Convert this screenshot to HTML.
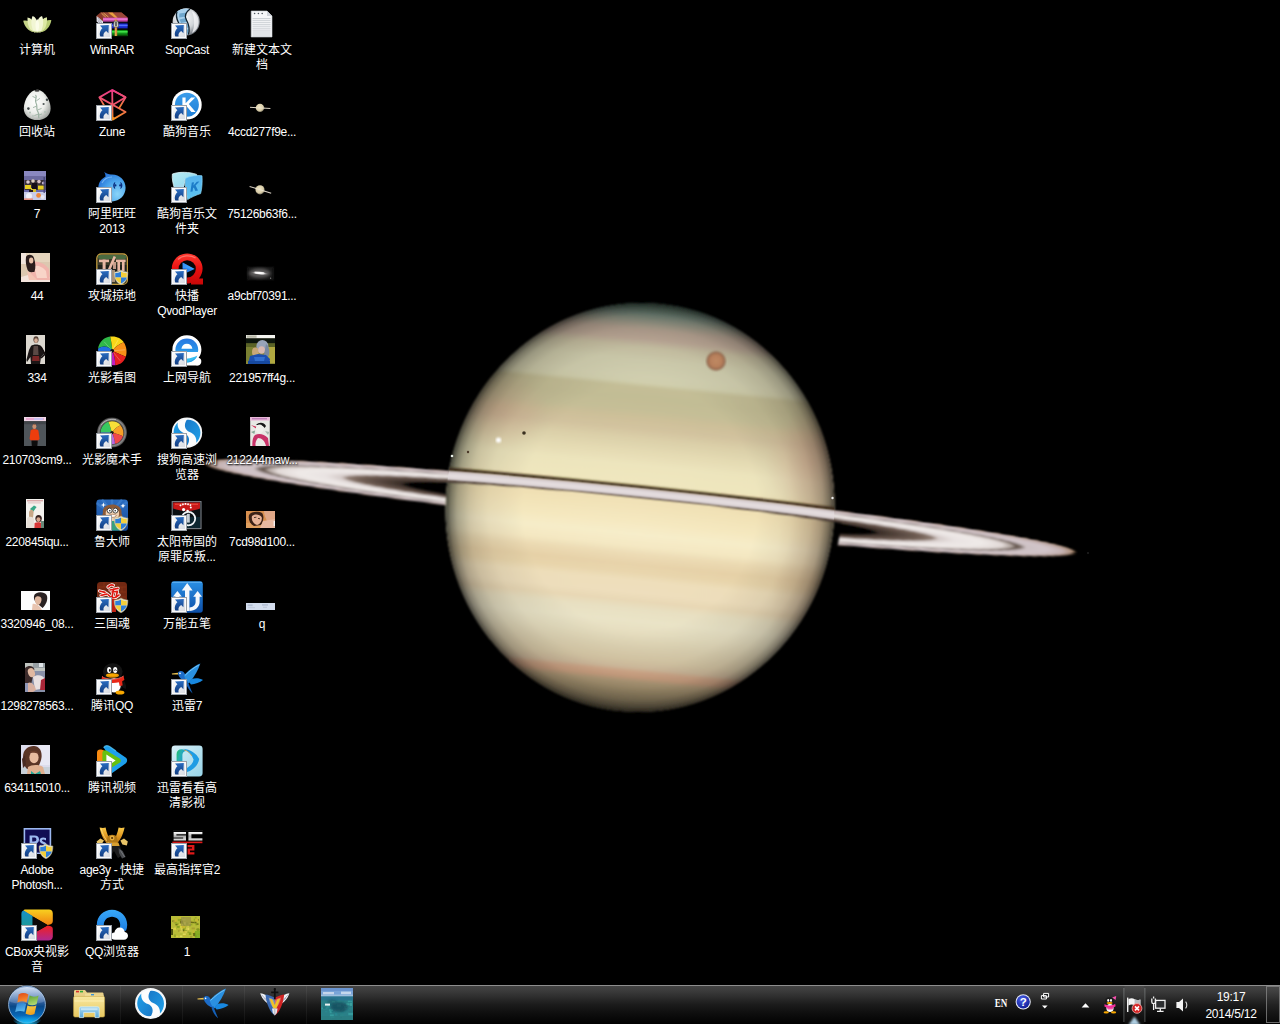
<!DOCTYPE html>
<html lang="zh-CN"><head><meta charset="utf-8"><title>Desktop</title>
<style>
html,body{margin:0;padding:0;background:#000;}
body{width:1280px;height:1024px;overflow:hidden;position:relative;font-family:"Liberation Sans",sans-serif;}
#wall{position:absolute;left:0;top:0;width:1280px;height:1024px;}
.ic{position:absolute;width:75px;height:82px;}
.ic svg{position:absolute;left:21px;top:0;width:32px;height:32px;overflow:visible;}
.ic .lb{position:absolute;left:-6.5px;top:36px;width:87px;text-align:center;color:#fff;font-size:12px;line-height:15px;
 text-shadow:1px 1px 2px #000,0 0 2px #000;white-space:nowrap;}
.lb .a{letter-spacing:-0.3px;}
#tb{position:absolute;left:0;top:985px;width:1280px;height:39px;
 background:linear-gradient(#434343 0,#3f3f3f 8%,#2e2e2e 28%,#1c1c1c 48%,#101010 68%,#070707 88%,#010101 100%);border-top:1px solid #8e8e8e;box-sizing:border-box;}
#tb .t{position:absolute;color:#fff;font-size:12px;white-space:nowrap;}
</style></head><body>
<svg id="wall" viewBox="0 0 1280 1024">
<defs>
<linearGradient id="bands" x1="0" y1="0" x2="0" y2="1"><stop offset="0.0002" stop-color="#4e6a5c"/><stop offset="0.0149" stop-color="#5f7e6e"/><stop offset="0.0320" stop-color="#7f978a"/><stop offset="0.0467" stop-color="#9ca494"/><stop offset="0.0589" stop-color="#b0aa98"/><stop offset="0.0711" stop-color="#c0ad9c"/><stop offset="0.0931" stop-color="#c6b2a0"/><stop offset="0.1127" stop-color="#cdc6a8"/><stop offset="0.1444" stop-color="#d2d0b0"/><stop offset="0.1835" stop-color="#d2d0b0"/><stop offset="0.1982" stop-color="#d0ceac"/><stop offset="0.2104" stop-color="#c2bc94"/><stop offset="0.2373" stop-color="#c0ba92"/><stop offset="0.2666" stop-color="#c3bc94"/><stop offset="0.2862" stop-color="#cbbd96"/><stop offset="0.3106" stop-color="#d0c09c"/><stop offset="0.3350" stop-color="#d9cda6"/><stop offset="0.3644" stop-color="#e2d8b0"/><stop offset="0.3986" stop-color="#ebe3bb"/><stop offset="0.4377" stop-color="#eee5bc"/><stop offset="0.4670" stop-color="#eddcb0"/><stop offset="0.5012" stop-color="#f1e1b5"/><stop offset="0.5379" stop-color="#f4e7be"/><stop offset="0.5648" stop-color="#f6ecc8"/><stop offset="0.5941" stop-color="#f3e6c0"/><stop offset="0.6136" stop-color="#ead8b0"/><stop offset="0.6381" stop-color="#e4cea4"/><stop offset="0.6576" stop-color="#e6d2a8"/><stop offset="0.6772" stop-color="#ecdcb8"/><stop offset="0.7065" stop-color="#ecdcba"/><stop offset="0.7261" stop-color="#e6d5b2"/><stop offset="0.7456" stop-color="#e6dec0"/><stop offset="0.7749" stop-color="#e8e2c6"/><stop offset="0.8043" stop-color="#e4dcbe"/><stop offset="0.8360" stop-color="#ddd2b2"/><stop offset="0.8678" stop-color="#d9caa8"/><stop offset="0.8873" stop-color="#d5bfa0"/><stop offset="0.8971" stop-color="#d8ac8c"/><stop offset="0.9093" stop-color="#d3a584"/><stop offset="0.9216" stop-color="#b6a07c"/><stop offset="0.9411" stop-color="#a4926f"/><stop offset="0.9704" stop-color="#8a7c5e"/><stop offset="0.9998" stop-color="#6a6048"/></linearGradient>
<radialGradient id="ringg" cx="0.5" cy="0.5" r="0.5"><stop offset="0.0000" stop-color="#000" stop-opacity="0"/><stop offset="0.5250" stop-color="#000" stop-opacity="0"/><stop offset="0.5480" stop-color="#3a2e28" stop-opacity="1"/><stop offset="0.5900" stop-color="#54443c" stop-opacity="1"/><stop offset="0.6400" stop-color="#705e54" stop-opacity="1"/><stop offset="0.6680" stop-color="#8e7c72" stop-opacity="1"/><stop offset="0.6840" stop-color="#d6ccca" stop-opacity="1"/><stop offset="0.7200" stop-color="#e9e3e2" stop-opacity="1"/><stop offset="0.7800" stop-color="#efeae8" stop-opacity="1"/><stop offset="0.8300" stop-color="#e2dad8" stop-opacity="1"/><stop offset="0.8500" stop-color="#b0a49e" stop-opacity="1"/><stop offset="0.8620" stop-color="#64564e" stop-opacity="1"/><stop offset="0.8720" stop-color="#80726c" stop-opacity="1"/><stop offset="0.8840" stop-color="#cdc1c4" stop-opacity="1"/><stop offset="0.9300" stop-color="#d2c5ca" stop-opacity="1"/><stop offset="0.9680" stop-color="#c4b2b2" stop-opacity="1"/><stop offset="0.9880" stop-color="#b0927e" stop-opacity="0.95"/><stop offset="1.0000" stop-color="#6a4828" stop-opacity="0"/></radialGradient>
<radialGradient id="limb" cx="0.5" cy="0.5" r="0.5"><stop offset="0" stop-color="#000" stop-opacity="0"/><stop offset="0.60" stop-color="#000" stop-opacity="0"/><stop offset="0.78" stop-color="#201810" stop-opacity="0.07"/><stop offset="0.88" stop-color="#201810" stop-opacity="0.17"/><stop offset="0.94" stop-color="#181410" stop-opacity="0.30"/><stop offset="0.975" stop-color="#100e0c" stop-opacity="0.48"/><stop offset="1" stop-color="#080808" stop-opacity="0.72"/></radialGradient>
<radialGradient id="glow" cx="0.5" cy="0.52" r="0.5"><stop offset="0" stop-color="#fff4d8" stop-opacity="0.14"/><stop offset="0.6" stop-color="#fff6d0" stop-opacity="0.05"/><stop offset="1" stop-color="#fff" stop-opacity="0"/></radialGradient>
<linearGradient id="tealL" x1="0" y1="0" x2="1" y2="0"><stop offset="0" stop-color="#3a6a5c" stop-opacity="0.22"/><stop offset="0.03" stop-color="#4a7a6c" stop-opacity="0.10"/><stop offset="0.08" stop-color="#4a7a6c" stop-opacity="0"/><stop offset="0.86" stop-color="#a06850" stop-opacity="0"/><stop offset="0.96" stop-color="#a06850" stop-opacity="0.18"/><stop offset="1" stop-color="#605040" stop-opacity="0.3"/></linearGradient>
<radialGradient id="pinkT" cx="0.5" cy="0.5" r="0.5"><stop offset="0" stop-color="#d89c8c" stop-opacity="0.34"/><stop offset="0.6" stop-color="#d89c8c" stop-opacity="0.14"/><stop offset="1" stop-color="#d89c8c" stop-opacity="0"/></radialGradient>
<clipPath id="pclip"><ellipse cx="640.0" cy="507.5" rx="194.4" ry="204.6"/></clipPath>
<clipPath id="pclipS"><ellipse cx="640.0" cy="507.5" rx="194.4" ry="204.6" transform="rotate(5.7 640.0 507.5)"/></clipPath>
<clipPath id="upper"><rect x="0" y="448.0" width="1280" height="60"/></clipPath>
<filter id="b1" x="-5%" y="-5%" width="110%" height="110%"><feGaussianBlur stdDeviation="1.0"/></filter>
<filter id="b2" x="-5%" y="-50%" width="110%" height="200%"><feGaussianBlur stdDeviation="0.8"/></filter>
<radialGradient id="titan" cx="0.5" cy="0.5" r="0.5"><stop offset="0" stop-color="#bf8a64"/><stop offset="0.62" stop-color="#b67e5a"/><stop offset="0.86" stop-color="#94684e"/><stop offset="1" stop-color="#8a7058" stop-opacity="0.55"/></radialGradient>
</defs>
<rect width="1280" height="1024" fill="#000"/>
<g transform="rotate(5.85 640.0 508.0)" filter="url(#b2)"><ellipse cx="640.0" cy="508.0" rx="439.5" ry="19.0" fill="url(#ringg)"/></g>
<path d="M828 520 L842 520 L836 556 L822 556Z" fill="#000" filter="url(#b2)"/>
<g filter="url(#b1)"><g transform="rotate(5.7 640.0 507.5)"><g clip-path="url(#pclip)"><rect x="443.6" y="300.9" width="392.8" height="413.2" fill="url(#bands)"/><ellipse cx="640.0" cy="527.5" rx="194.4" ry="204.6" fill="url(#glow)"/><rect x="445.6" y="302.9" width="388.8" height="409.2" fill="url(#tealL)"/><ellipse cx="806.0" cy="445.5" rx="46" ry="52" fill="url(#pinkT)"/><ellipse cx="490.0" cy="423.5" rx="50" ry="40" fill="url(#pinkT)" opacity="0.75"/><ellipse cx="640.0" cy="507.5" rx="194.4" ry="204.6" fill="url(#limb)"/></g></g></g>
<g clip-path="url(#pclipS)"><g transform="rotate(5.85 640.0 508.0)"><g clip-path="url(#upper)" filter="url(#b2)"><ellipse cx="640.0" cy="506.4" rx="439.5" ry="19.0" fill="none" stroke="#34240e" stroke-width="3.6" opacity="0.95"/></g></g></g>
<g transform="rotate(5.85 640.0 508.0)"><g clip-path="url(#upper)"><g filter="url(#b2)"><ellipse cx="640.0" cy="508.0" rx="439.5" ry="19.0" fill="url(#ringg)"/></g></g></g>
<g clip-path="url(#pclipS)"><g transform="rotate(5.85 640.0 508.0)"><g clip-path="url(#upper)" filter="url(#b2)"><ellipse cx="640.0" cy="508.0" rx="353.7975" ry="15.295000000000002" fill="none" stroke="#d9d0d3" stroke-width="7.6"/><ellipse cx="640.0" cy="508.0" rx="347.20500000000004" ry="15.010000000000002" fill="none" stroke="#e6dfe0" stroke-width="3"/></g></g></g>
<circle cx="716" cy="361" r="10" fill="url(#titan)" filter="url(#b2)"/><circle cx="524" cy="433" r="1.8" fill="#3a3020"/><circle cx="498.5" cy="440" r="2.6" fill="#fff" filter="url(#b2)"/><circle cx="468" cy="452" r="1.2" fill="#4a3828"/><circle cx="452" cy="456" r="1.3" fill="#e8f0e8"/><circle cx="832.5" cy="498" r="1.2" fill="#f0f0f0"/><circle cx="1088" cy="553" r="1" fill="#222"/>
</svg>
<svg width="0" height="0" style="position:absolute"><defs>
<linearGradient id="scbg" x1="0" y1="0" x2="1" y2="1"><stop offset="0" stop-color="#ffffff"/><stop offset="1" stop-color="#d4d8e0"/></linearGradient>
<linearGradient id="scar" x1="0" y1="0" x2="0" y2="1"><stop offset="0" stop-color="#2a6cc0"/><stop offset="1" stop-color="#123c80"/></linearGradient>
<g id="sc"><rect x="0.5" y="16.5" width="15" height="15" fill="url(#scbg)" stroke="#9aa0a8" stroke-width="1"/>
<rect x="1.5" y="17.5" width="13" height="13" fill="none" stroke="#fff" stroke-width="1" opacity="0.8"/>
<path d="M4 18.6 L12.8 18 L12.4 26.2 L10.2 24 C8.2 25.2 7 27 7.6 29.6 L4.4 29.6 C3 26.6 4.2 23.2 6.4 21.2 Z" fill="url(#scar)"/></g>
<g id="uac"><path d="M25 17 C27.5 18.6 29.8 19 31.8 19 C32 25 30 29.4 25 31.8 C20 29.4 18 25 18.2 19 C20.2 19 22.5 18.6 25 17Z" fill="#e8e4d0" stroke="#b0a880" stroke-width="0.6"/>
<path d="M25 18.4 L25 24.4 L19.3 24.4 C19.2 22.8 19.2 21.4 19.3 20 C21.4 19.9 23.2 19.4 25 18.4Z" fill="#2e7fd8"/>
<path d="M25 18.4 C26.8 19.4 28.6 19.9 30.7 20 C30.8 21.4 30.8 22.8 30.7 24.4 L25 24.4Z" fill="#f4d03a"/>
<path d="M19.3 24.4 L25 24.4 L25 30.4 C21.8 28.8 19.9 26.8 19.3 24.4Z" fill="#f4d03a"/>
<path d="M25 24.4 L30.7 24.4 C30.1 26.8 28.2 28.8 25 30.4Z" fill="#2e7fd8"/></g>
<radialGradient id="gEgg" cx="0.42" cy="0.4" r="0.62"><stop offset="0" stop-color="#ffffff"/><stop offset="0.6" stop-color="#eceeea"/><stop offset="1" stop-color="#a8aca8"/></radialGradient>
<radialGradient id="gSop" cx="0.4" cy="0.35" r="0.7"><stop offset="0" stop-color="#ffffff"/><stop offset="0.6" stop-color="#d0d4d8"/><stop offset="1" stop-color="#6a7078"/></radialGradient>
<linearGradient id="gZune" x1="0" y1="0" x2="0" y2="1"><stop offset="0" stop-color="#ec3c86"/><stop offset="0.5" stop-color="#ee5a6a"/><stop offset="1" stop-color="#f59020"/></linearGradient>
<linearGradient id="gKg" x1="0" y1="0" x2="0" y2="1"><stop offset="0" stop-color="#3a9cea"/><stop offset="1" stop-color="#1f7fd6"/></linearGradient>
<radialGradient id="gSat" cx="0.45" cy="0.4" r="0.6"><stop offset="0" stop-color="#f0e6c4"/><stop offset="0.7" stop-color="#d8cca8"/><stop offset="1" stop-color="#7a7460"/></radialGradient>
<radialGradient id="gAli" cx="0.7" cy="0.75" r="0.9"><stop offset="0" stop-color="#8ad4f8"/><stop offset="0.5" stop-color="#4aa4ec"/><stop offset="1" stop-color="#1c62d0"/></radialGradient>
<linearGradient id="gFoldB" x1="0" y1="0" x2="1" y2="1"><stop offset="0" stop-color="#b8ecf4"/><stop offset="1" stop-color="#8ad4ec"/></linearGradient>
<linearGradient id="gFoldF" x1="0" y1="0" x2="0" y2="1"><stop offset="0" stop-color="#58b4ee"/><stop offset="1" stop-color="#5cc4f0"/></linearGradient>
<linearGradient id="gQv" x1="0" y1="0" x2="0" y2="1"><stop offset="0" stop-color="#ff3a30"/><stop offset="0.5" stop-color="#e81010"/><stop offset="1" stop-color="#c80808"/></linearGradient>
<linearGradient id="gQvP" x1="0" y1="0" x2="1" y2="0"><stop offset="0" stop-color="#1060e0"/><stop offset="1" stop-color="#38a0ff"/></linearGradient>
<radialGradient id="gGal" cx="0.5" cy="0.5" r="0.5"><stop offset="0" stop-color="#ffffff"/><stop offset="0.5" stop-color="#c8c4c4"/><stop offset="1" stop-color="#444" stop-opacity="0"/></radialGradient>
<linearGradient id="gIe" x1="0" y1="0" x2="0" y2="1"><stop offset="0" stop-color="#2a78e0"/><stop offset="0.6" stop-color="#2a90e8"/><stop offset="1" stop-color="#38c0f0"/></linearGradient>
<radialGradient id="gRing" cx="0.5" cy="0.5" r="0.5"><stop offset="0.78" stop-color="#555"/><stop offset="0.88" stop-color="#8a8a8a"/><stop offset="1" stop-color="#3a3a3a"/></radialGradient>
<linearGradient id="gSg" x1="0" y1="0" x2="1" y2="1"><stop offset="0" stop-color="#1878c8"/><stop offset="1" stop-color="#20a0e8"/></linearGradient>
<linearGradient id="gLu" x1="0" y1="0" x2="0" y2="1"><stop offset="0" stop-color="#2a6cc0"/><stop offset="1" stop-color="#174a98"/></linearGradient>
<linearGradient id="gWb" x1="0" y1="0" x2="0" y2="1"><stop offset="0" stop-color="#2a90e4"/><stop offset="1" stop-color="#0c4ea8"/></linearGradient>
<linearGradient id="gKk" x1="0" y1="0" x2="1" y2="1"><stop offset="0" stop-color="#d8f0f8"/><stop offset="1" stop-color="#98d4e8"/></linearGradient>
<linearGradient id="gKkP" x1="0" y1="0" x2="1" y2="0.6"><stop offset="0" stop-color="#20c060"/><stop offset="0.35" stop-color="#28b0b0"/><stop offset="1" stop-color="#1890e0"/></linearGradient>
<linearGradient id="gCbY" x1="0" y1="0" x2="0" y2="1"><stop offset="0" stop-color="#f8d020"/><stop offset="1" stop-color="#f08010"/></linearGradient>
<linearGradient id="gCbR" x1="0" y1="0" x2="0" y2="1"><stop offset="0" stop-color="#f02020"/><stop offset="1" stop-color="#b02890"/></linearGradient>
<linearGradient id="gCbB" x1="0" y1="0" x2="0" y2="1"><stop offset="0" stop-color="#1890c8"/><stop offset="1" stop-color="#20a070"/></linearGradient>
<linearGradient id="gQb" x1="0" y1="0" x2="0" y2="1"><stop offset="0" stop-color="#38a8f8"/><stop offset="1" stop-color="#1878e0"/></linearGradient>
<linearGradient id="gGold" x1="0" y1="0" x2="0" y2="1"><stop offset="0" stop-color="#f8c848"/><stop offset="0.5" stop-color="#e09820"/><stop offset="1" stop-color="#a86810"/></linearGradient>
<linearGradient id="gSc" x1="0" y1="0" x2="0" y2="1"><stop offset="0" stop-color="#ffffff"/><stop offset="0.5" stop-color="#b0b0b0"/><stop offset="1" stop-color="#e0e0e0"/></linearGradient>
<filter id="fb" x="-20%" y="-20%" width="140%" height="140%"><feGaussianBlur stdDeviation="0.5"/></filter>
<filter id="fb1" x="-20%" y="-20%" width="140%" height="140%"><feGaussianBlur stdDeviation="1"/></filter>
<filter id="fb2" x="-30%" y="-30%" width="160%" height="160%"><feGaussianBlur stdDeviation="1.8"/></filter>
</defs></svg>
<div class="ic" style="left:0px;top:7px"><svg viewBox="0 0 32 32"><g filter="url(#fb)"><path d="M2.2 13.8 C6 13 9 14.5 11 17 L12 25 C7 24 3.5 19.5 2.2 13.8Z" fill="#c6d488"/><path d="M30.4 13.2 C26.5 12.6 23.5 14.4 21.6 17 L20.5 25 C25.5 24 29.2 19.4 30.4 13.2Z" fill="#b8cc74"/><path d="M6.5 10.5 C10 11 12.5 13.5 13.5 17 L14 25.4 C9 24.6 6 18 6.5 10.5Z" fill="#e6eeb8"/><path d="M26 10.2 C22.4 10.8 20 13.4 19 17 L18.6 25.4 C23.5 24.6 26.6 18 26 10.2Z" fill="#dce8a4"/><path d="M11.6 9 C14.5 10 16 13 16.2 16 C16.4 13 18 10 21 9 C23 13 22.6 20 19.5 25.2 L13 25.2 C10 20 9.6 13 11.6 9Z" fill="#f2f6d4"/><path d="M16.2 12 C18.6 15 18.8 21 16.4 25.5 C13.8 21 13.8 15 16.2 12Z" fill="#fbfce8"/><path d="M8 22 C11 25.6 21 25.8 24.5 22 C22 26.4 10.5 26.6 8 22Z" fill="#a8b868"/></g></svg><div class="lb">计算机</div></div>
<div class="ic" style="left:75px;top:7px"><svg viewBox="0 0 32 32"><g transform="translate(0 4.6)"><path d="M0.6 4.2 L4.5 1 L25.5 1 L31.6 6 L31.6 9.4 L7 9.4 L7 10.5 L0.6 6.8Z" fill="#8a3a2a"/><path d="M4.5 1 L25.5 1 L31.6 6 L7 6Z" fill="#9a4838"/><path d="M12 1 L16.5 1 L21.5 6 L21 9 L18.6 9 L19 6.5Z" fill="#e8a040"/><path d="M5.5 1.6 L10 5.8 M7.5 1.4 L12.6 5.6" stroke="#f0b858" stroke-width="0.8"/><rect x="7" y="6" width="24.6" height="4.2" fill="#c848a8"/><rect x="7" y="6.8" width="24.6" height="1.4" fill="#f080d8"/><path d="M0.6 4.4 L7 9.6 L7 15 L0.6 9.8Z" fill="#e8e8f0"/><path d="M1.6 6 L6.2 9.8 M1.6 7.8 L6.2 11.6 M1.6 9.4 L6.2 13.2" stroke="#8a8a9a" stroke-width="0.7"/><rect x="7" y="10.2" width="24.6" height="1.6" fill="#101020"/><rect x="7" y="11.8" width="24.6" height="5.2" fill="#1828c8"/><rect x="7" y="13" width="24.6" height="1.6" fill="#5070ff"/><rect x="7" y="17" width="24.6" height="1.4" fill="#081008"/><rect x="7" y="18.4" width="24.6" height="6" fill="#109018"/><rect x="7" y="19.4" width="24.6" height="1.6" fill="#40e048"/><rect x="7" y="23" width="24.6" height="1.6" fill="#084808"/><rect x="18.6" y="8" width="2.6" height="16.4" fill="#c88030"/><rect x="19.3" y="8" width="1" height="16.4" fill="#f0b860"/><path d="M18 9.6 L22 9.6 L22.6 15.4 L17.4 15.4Z" fill="#d8d8d0" stroke="#404040" stroke-width="0.6"/><rect x="19.4" y="10.4" width="1.2" height="4" fill="#202020"/></g><use href="#sc"/></svg><div class="lb"><span class="a">WinRAR</span></div></div>
<div class="ic" style="left:150px;top:7px"><svg viewBox="0 0 32 32"><circle cx="15.2" cy="14.8" r="13.6" fill="url(#gSop)"/><path d="M6 4.6 C10 1.4 15 0.8 19 2 C15 5 13 9 15.4 13 C18 17.4 19.4 21 17.4 27.6 L10 27.4 C11 22 9 18.6 7.2 15 C5.4 11.4 5 7.6 6 4.6Z" fill="#a8d0ec"/><path d="M8.4 6.6 L15.6 5.6 L14.8 9.4 L8.2 10.6Z M8.6 12.4 L15 11 L16.6 14.6 L10 16Z M10.8 17.8 L17.4 16.4 L18 20.4 L11.6 21.6Z M11.8 23.4 L18 22.2 L17.4 26.4 L11.6 27Z" fill="#6ea6cc"/><path d="M6 4.6 C5 7.6 5.4 11.4 7.2 15 C9 18.6 11 22 10 27.4" fill="none" stroke="#10202c" stroke-width="1.3"/><path d="M19 2 C15 5 13 9 15.4 13 C18 17.4 19.4 21 17.4 27.6" fill="none" stroke="#10202c" stroke-width="1.3"/><path d="M20.5 4 C25 6 27.6 10 27.6 15 C27.6 20 25 24 21 26 C24 20 24 10 20.5 4Z" fill="#f4f4f6" opacity="0.8"/><use href="#sc"/></svg><div class="lb"><span class="a">SopCast</span></div></div>
<div class="ic" style="left:225px;top:7px"><svg viewBox="0 0 32 32"><path d="M5.2 4 L21 4 L26 9 L26 30 L5.2 30Z" fill="#f6f7f9" stroke="#c8ccd2" stroke-width="0.6"/><path d="M21 4 L21 9 L26 9Z" fill="#d0d4da"/><circle cx="8.6" cy="6.5" r="0.8" fill="#505860"/><circle cx="12.4" cy="6.5" r="0.8" fill="#505860"/><circle cx="16.2" cy="6.5" r="0.8" fill="#505860"/><rect x="6.6" y="11.0" width="18" height="0.8" fill="#c4c8ce"/><rect x="6.6" y="12.9" width="18" height="0.8" fill="#c4c8ce"/><rect x="6.6" y="14.9" width="18" height="0.8" fill="#c4c8ce"/><rect x="6.6" y="16.9" width="18" height="0.8" fill="#c4c8ce"/><rect x="6.6" y="18.8" width="18" height="0.8" fill="#c4c8ce"/><rect x="6.6" y="20.8" width="18" height="0.8" fill="#c4c8ce"/><rect x="6.6" y="22.7" width="18" height="0.8" fill="#c4c8ce"/><rect x="6.6" y="24.6" width="18" height="0.8" fill="#c4c8ce"/><rect x="6.6" y="26.6" width="18" height="0.8" fill="#c4c8ce"/><rect x="6.6" y="28.6" width="18" height="0.8" fill="#c4c8ce"/></svg><div class="lb">新建文本文<br>档</div></div>
<div class="ic" style="left:0px;top:89px"><svg viewBox="0 0 32 32"><path d="M16 0.8 C23 0.8 29.6 11 29.6 19.4 C29.6 26.6 23.6 31 16.2 31 C8.8 31 2.8 26.6 2.8 19.4 C2.8 11 9 0.8 16 0.8Z" fill="url(#gEgg)"/><ellipse cx="16" cy="1.8" rx="2.6" ry="1" fill="#404040"/><path d="M14.5 6 C17 8 13 11 15 14 C17 17 14.5 20 17 23 C18.5 25 17 27 18 29" fill="none" stroke="#9ab0a0" stroke-width="1.2"/><path d="M15 9 L11.5 7.4 M15.2 12 L18.8 9.4 M16 17 L12 18.6 M16.6 21 L20.6 19.4 M17.4 25 L13.4 26.6 M17.6 26 L21 25" stroke="#a4b8aa" stroke-width="1"/><circle cx="26" cy="10.8" r="1.2" fill="#404848"/><circle cx="22.6" cy="15" r="1.1" fill="#505858"/><circle cx="7.4" cy="19.6" r="1.3" fill="#404848"/><circle cx="9" cy="23.6" r="1" fill="#b0c0b4"/><circle cx="24" cy="23" r="1" fill="#b0c0b4"/><circle cx="12" cy="27" r="0.9" fill="#b8c4bc"/></svg><div class="lb">回收站</div></div>
<div class="ic" style="left:75px;top:89px"><svg viewBox="0 0 32 32"><g fill="none" stroke="url(#gZune)" stroke-width="1.8" stroke-linejoin="round"><path d="M16.2 1 L3.4 8.4 L29.6 23 L16.6 30.6 L16.2 1 L29.6 8.2 L4 23.6 L16.6 30.6"/><path d="M29.6 8.2 L23 19.4 M3.4 8.4 L10 19.8 M16.2 1 L29.6 8.2"/></g><path d="M16.2 0.6 L18.6 2.4 L14 2.6Z" fill="#ec3c86"/><path d="M29.8 8 L28.4 10.8 L27 7.2Z" fill="#ee4c7a"/><path d="M16.6 30.8 L16.4 27.6 L19.4 29.2Z" fill="#f59020"/><use href="#sc"/></svg><div class="lb"><span class="a">Zune</span></div></div>
<div class="ic" style="left:150px;top:89px"><svg viewBox="0 0 32 32"><circle cx="15.9" cy="15.8" r="14.8" fill="#ffffff"/><circle cx="15.9" cy="15.8" r="12" fill="url(#gKg)"/><path d="M11.4 8.6 L14.6 8.6 L14.6 14.2 L20.2 8.6 L24.2 8.6 L17.8 15 L24.6 23 L20.4 23 L15.6 17.2 L14.6 18.2 L14.6 23 L11.4 23Z" fill="#ffffff"/><use href="#sc"/></svg><div class="lb">酷狗音乐</div></div>
<div class="ic" style="left:225px;top:89px"><svg viewBox="0 0 32 32"><g filter="url(#fb)"><path d="M4 18.3 L24.4 19.5" stroke="#d8d0c0" stroke-width="1"/><circle cx="14" cy="18.9" r="4.2" fill="url(#gSat)"/><path d="M9.4 18.7 L18.6 19.2" stroke="#efe8d4" stroke-width="0.7"/></g></svg><div class="lb"><span class="a">4ccd277f9e...</span></div></div>
<div class="ic" style="left:0px;top:171px"><svg viewBox="0 0 32 32"><g filter="url(#fb)"><rect x="3" y="0" width="22" height="29" fill="#6a68a8"/><rect x="3" y="0" width="22" height="5" fill="#8a88c0"/><rect x="3" y="5" width="22" height="5" fill="#6c6aa0"/><rect x="3.5" y="9" width="21" height="10" fill="#3a3038"/><circle cx="7" cy="11" r="1.8" fill="#d8c8d0"/><circle cx="12" cy="10" r="1.8" fill="#e0d0c0"/><circle cx="18" cy="10.6" r="1.8" fill="#d8c0c8"/><circle cx="22.4" cy="12" r="1.5" fill="#c8b8d0"/><rect x="4" y="14" width="6" height="4" fill="#e8d020"/><rect x="17" y="14.6" width="6.4" height="4" fill="#e8d020"/><rect x="10" y="17" width="5" height="4" fill="#d8c028"/><rect x="11" y="12" width="5" height="6" fill="#181018"/><rect x="8" y="19" width="4" height="5" fill="#201820"/><rect x="3" y="21" width="22" height="8" fill="#c8cce8"/><circle cx="8" cy="25" r="3" fill="#f0f0f8"/><circle cx="17.6" cy="24.4" r="2.4" fill="#f08838"/><circle cx="21.6" cy="26" r="2" fill="#e8e8f4"/><rect x="3" y="27.4" width="9" height="1.6" fill="#e89080"/><rect x="22.6" y="6" width="1.2" height="16" fill="#404070"/></g></svg><div class="lb">7</div></div>
<div class="ic" style="left:75px;top:171px"><svg viewBox="0 0 32 32"><path d="M8.2 0.8 C10.4 2.6 12.6 3.4 15 3.6 C23 3 29.6 9 29.6 16.8 C29.6 24.4 23.6 30.4 16 30.4 C8.4 30.4 2.4 24.4 2.4 16.8 C2.4 11 5.6 7.6 9.6 5.4 C9.4 3.8 9 2.2 8.2 0.8Z" fill="url(#gAli)"/><path d="M19 11 C16.6 12.4 16.6 16.6 19 18 C19.8 17.4 18.6 16.2 18.6 14.5 C18.6 12.8 19.8 11.6 19 11Z" fill="#0a2f80"/><path d="M24.6 11 C27 12.4 27 16.6 24.6 18 C23.8 17.4 25 16.2 25 14.5 C25 12.8 23.8 11.6 24.6 11Z" fill="#0a2f80"/><circle cx="19.4" cy="14.4" r="1.1" fill="#0a2f80"/><circle cx="24.2" cy="14.4" r="1.1" fill="#0a2f80"/><path d="M6 12 C8 8 12 6 16 6" fill="none" stroke="#9ad0ff" stroke-width="1.2" opacity="0.6"/><use href="#sc"/></svg><div class="lb">阿里旺旺<br><span class="a">2013</span></div></div>
<div class="ic" style="left:150px;top:171px"><svg viewBox="0 0 32 32"><path d="M1.4 3 C8 0.6 18 0.8 25.6 3.4 L26 6 L14 8 L13 15 L3.4 17 C2 13 0.8 7 1.4 3Z" fill="url(#gFoldB)" stroke="#dff6fb" stroke-width="0.8"/><path d="M3.4 15 C6 13.6 10 13.2 13 14 L13 18 L4 19Z" fill="#a8dcf0"/><path d="M14.4 7.4 C19 4.8 26 4 31 4.8 C31.4 11 31 18 29.6 22.6 C25 24 20 26.4 16.6 28.6 C15 22 13.6 13 14.4 7.4Z" fill="url(#gFoldF)" stroke="#8ad8f8" stroke-width="0.7"/><path d="M20.8 11.6 L23 11.2 L22.4 14.6 L25.8 10.8 L28.4 10.4 L24.6 14.6 L27 19.6 L24.4 20 L22.8 16.4 L22 17.2 L21.6 20.4 L19.4 20.8Z" fill="#1c7cc8"/><use href="#sc"/></svg><div class="lb">酷狗音乐文<br>件夹</div></div>
<div class="ic" style="left:225px;top:171px"><svg viewBox="0 0 32 32"><g filter="url(#fb)"><path d="M3.6 15.4 L25.2 22.2" stroke="#d8d0c4" stroke-width="1.1"/><circle cx="14" cy="18.8" r="4.6" fill="url(#gSat)"/><path d="M9.6 17.4 L18.6 20.2" stroke="#f0e8d8" stroke-width="0.8"/></g></svg><div class="lb"><span class="a">75126b63f6...</span></div></div>
<div class="ic" style="left:0px;top:253px"><svg viewBox="0 0 32 32"><g filter="url(#fb)"><rect x="0" y="0" width="29" height="29" fill="#dcc8b0"/><rect x="0" y="0" width="29" height="9" fill="#e4d4bc"/><rect x="0" y="0" width="5" height="11" fill="#f0e4dc"/><path d="M0 24 L14 20 L29 24 L29 29 L0 29Z" fill="#f4e4dc"/><path d="M11 9 C15 7 24 10 28 16 L29 27 L14 27 C9 24 8 16 11 9Z" fill="#f0b4ac"/><path d="M13 13 C17 12 22 14 25 18 L26 25 L16 25Z" fill="#f8d4c8"/><path d="M5 4 C6 1 12 1 13 5 C14.6 10 15 15 13.4 19 C11 19 8 20 6.6 17 C5 13 4.4 8 5 4Z" fill="#2a1c1c"/><ellipse cx="10.2" cy="7.4" rx="2.2" ry="3" fill="#e8c0a8"/><path d="M6 18 C10 20 13 24 16 27 L8 27Z" fill="#f4c4b4"/></g></svg><div class="lb"><span class="a">44</span></div></div>
<div class="ic" style="left:75px;top:253px"><svg viewBox="0 0 32 32"><rect x="0.8" y="0.8" width="30.6" height="30.6" rx="4.5" fill="#3a3a28" stroke="#c8a040" stroke-width="1.2"/><rect x="2" y="2" width="28.4" height="4" rx="2" fill="#4a6a40"/><rect x="2" y="12" width="28.4" height="8" fill="#20221c"/><g fill="#e8b8a4"><rect x="3" y="6.6" width="10" height="2.6"/><rect x="6.6" y="6.6" width="3" height="12"/><path d="M12 16 L17.6 3 L20 4 L14.4 17Z"/><rect x="20" y="6.6" width="9.6" height="2.4"/><rect x="21.4" y="9" width="2.6" height="9"/><rect x="26" y="9" width="2.6" height="9"/><rect x="17" y="9" width="3" height="7" opacity="0.8"/></g><rect x="16" y="17" width="3" height="12" fill="#a89078"/><use href="#sc"/><use href="#uac"/></svg><div class="lb">攻城掠地</div></div>
<div class="ic" style="left:150px;top:253px"><svg viewBox="0 0 32 32"><path d="M16.2 0.4 C24.8 0.4 31.6 7.2 31.6 15.6 C31.6 19.4 30.2 22.8 28 25.4 L32 25.6 L32 31.6 L20 31.6 L20 29.8 C18.8 30.4 17.4 30.6 16.2 30.6 C7.6 30.6 0.8 23.8 0.8 15.6 C0.8 7.2 7.6 0.4 16.2 0.4Z" fill="url(#gQv)"/><circle cx="16.2" cy="15.8" r="8.6" fill="#050508"/><path d="M7 6.4 C11 2.4 19 1.6 24.6 5" fill="none" stroke="#ff8a80" stroke-width="1.4" opacity="0.7"/><path d="M11.6 9.4 L23.6 16 L11.6 21.6Z" fill="url(#gQvP)"/><path d="M11.6 9.4 L23.6 16 L11.6 15.2Z" fill="#50b0ff" opacity="0.6"/><use href="#sc"/></svg><div class="lb">快播<br><span class="a">QvodPlayer</span></div></div>
<div class="ic" style="left:225px;top:253px"><svg viewBox="0 0 32 32"><rect x="0.8" y="13.4" width="27.4" height="14.2" fill="#0c0c0c"/><rect x="2" y="14.4" width="25" height="12.2" fill="#141414" filter="url(#fb1)"/><ellipse cx="13.6" cy="20.2" rx="11" ry="4.6" fill="#5a5858" filter="url(#fb2)"/><ellipse cx="13.8" cy="20.2" rx="9.6" ry="2" fill="url(#gGal)" transform="rotate(5 13.8 20.2)"/><ellipse cx="13.4" cy="19.8" rx="5" ry="1.1" fill="#fff" filter="url(#fb)" transform="rotate(5 13.4 19.8)"/><circle cx="24.6" cy="25.2" r="0.6" fill="#888"/></svg><div class="lb"><span class="a">a9cbf70391...</span></div></div>
<div class="ic" style="left:0px;top:335px"><svg viewBox="0 0 32 32"><g filter="url(#fb)"><rect x="5" y="0" width="19" height="29" fill="#dcd8d0"/><ellipse cx="15" cy="4.6" rx="2.6" ry="3.4" fill="#5a4438"/><ellipse cx="15" cy="5.6" rx="1.8" ry="2.4" fill="#d8b098"/><path d="M10 11 C12 9 18 9 20 11 L23.6 18 L20 22 L19 29 L10 29 L9.4 22 L6 27 L5.4 25 L8 15Z" fill="#1c1818"/><path d="M12.6 11 L17 11 L17.6 20 L12 20Z" fill="#5a4a44"/><path d="M11.6 21 L18 21 L18.6 26 L11 26Z" fill="#7a2828"/><path d="M20 12 L24 19 L20 23" fill="none" stroke="#141010" stroke-width="1.6"/></g></svg><div class="lb"><span class="a">334</span></div></div>
<div class="ic" style="left:75px;top:335px"><svg viewBox="0 0 32 32"><g transform="translate(16.2 15.8)"><path d="M0 0 C-3 -4 -9 -6 -14.2 -2 C-13 -9 -8 -13.6 -2 -14.2 C-1 -9 0 -4 0 0Z" fill="#30b848"/><path d="M0 0 C0 -4 -1 -9 -2 -14.2 C4 -15 9 -12.6 11.6 -8.6 C7 -7 3 -4 0 0Z" fill="#f8d818"/><path d="M0 0 C3 -4 7 -7 11.6 -8.6 C14.6 -4 15 2 13.6 6 C9 4 4 2 0 0Z" fill="#f89018"/><path d="M0 0 C4 2 9 4 13.6 6 C12 11 8 14 3 14.4 C3 9 2 4 0 0Z" fill="#e82020"/><path d="M0 0 C2 4 3 9 3 14.4 C-1 15 -5 13.6 -7.6 11 C-4 8 -1 4 0 0Z" fill="#c020c0"/><path d="M0 0 C-1 4 -4 8 -7.6 11 C-11.6 8 -14 3 -14.2 -2 C-9 -6 -3 -4 0 0Z" fill="#2070e0"/><path d="M-8 -9 L0 0 M6 -11 L0 0 M13 -1 L0 0 M8 10 L0 0" stroke="#ffffff" stroke-width="0.5" opacity="0.5"/><circle cx="0" cy="0" r="1.9" fill="#101010"/></g><use href="#sc"/></svg><div class="lb">光影看图</div></div>
<div class="ic" style="left:150px;top:335px"><svg viewBox="0 0 32 32"><path d="M15.9 0.2 C24 0.2 30.4 6.6 30.4 14.4 C30.4 17.6 29.4 20.4 27.6 22.8 C30 23.4 30.6 25.4 30.2 27.4 C29.6 30 27.6 30.8 25 30.6 L8 30.6 C3.6 27.6 1.2 21 1.4 14.4 C1.4 6.6 7.8 0.2 15.9 0.2Z" fill="#ffffff"/><path d="M15.9 3.4 C22.2 3.4 27.2 8.2 27.2 14.4 C27.2 15.4 27.1 16.2 26.9 17 L9.6 17 C9.8 18.6 10.4 20 11.4 21.2 L4.8 19 C4.5 17.6 4.4 16 4.4 14.4 C4.6 8.2 9.6 3.4 15.9 3.4Z" fill="url(#gIe)"/><path d="M10.4 13.8 C11 10.6 13 8.8 15.9 8.8 C18.8 8.8 20.8 10.6 21.4 13.8Z" fill="#ffffff"/><path d="M16.4 27.6 C20.8 27.6 24.6 24.8 26.4 20.6 C23 22.4 19.4 23.4 16.4 23.6 C14 25 15 27.6 16.4 27.6Z" fill="#38c0f0"/><path d="M14.6 27.2 C19 27.8 23.6 25.6 26.2 21.4 C23 25 18 26.8 14.6 27.2Z" fill="#2a98e8"/><use href="#sc"/></svg><div class="lb">上网导航</div></div>
<div class="ic" style="left:225px;top:335px"><svg viewBox="0 0 32 32"><g filter="url(#fb)"><rect x="0" y="0" width="29" height="29" fill="#8a8838"/><rect x="0" y="3" width="29" height="5.6" fill="#101408"/><rect x="0" y="0" width="29" height="3.2" fill="#f4f4f0"/><rect x="0.6" y="0.4" width="10" height="2.4" fill="#b8b8a8"/><rect x="0" y="8.4" width="29" height="4" fill="#5a6428"/><rect x="22" y="12" width="7" height="16" fill="#b0a840"/><rect x="0" y="12" width="7" height="14" fill="#7a8030"/><ellipse cx="16.4" cy="11.4" rx="6" ry="6.4" fill="#98a4b8"/><ellipse cx="9.4" cy="17" rx="3.4" ry="4.4" fill="#c8a878"/><ellipse cx="15.6" cy="15" rx="3.4" ry="3.8" fill="#d8b8b0"/><path d="M20 9 C24 12 24 19 22 22 L18 20Z" fill="#7888a0"/><path d="M4 21 L12 19 L20 20 L24 24 L23 29 L2 29Z" fill="#1c50b0"/><path d="M8 22 L19 22 L18 26 L9 26Z" fill="#3070d0"/><path d="M2 26 L24 26 L24 29 L2 29Z" fill="#1848a0"/></g></svg><div class="lb"><span class="a">221957ff4g...</span></div></div>
<div class="ic" style="left:0px;top:417px"><svg viewBox="0 0 32 32"><g filter="url(#fb)"><rect x="3" y="0" width="22" height="29" fill="#50545a"/><rect x="3" y="0" width="22" height="4.2" fill="#f0d8e8"/><rect x="5" y="1" width="18" height="2" fill="#e8a8d0"/><rect x="13" y="1" width="9" height="2" fill="#c8c0f0"/><rect x="3" y="4.2" width="22" height="3" fill="#404448"/><ellipse cx="13.4" cy="9.4" rx="2" ry="2.6" fill="#c89070"/><path d="M11.4 8.4 C11.6 6.4 15.2 6.4 15.4 8.4 L14.6 7.6 L12.2 7.6Z" fill="#5a3020"/><path d="M9.6 13.4 C10.6 11.8 16.4 11.8 17.4 13.4 L18.6 22 L17 23.6 L10 23.6 L8.6 22Z" fill="#ee3c0c"/><path d="M10.4 23.6 L16.8 23.6 L16.4 29 L10.8 29Z" fill="#101010"/></g></svg><div class="lb"><span class="a">210703cm9...</span></div></div>
<div class="ic" style="left:75px;top:417px"><svg viewBox="0 0 32 32"><circle cx="16" cy="15.6" r="15" fill="url(#gRing)"/><circle cx="16" cy="15.6" r="11.6" fill="#222"/><g transform="translate(16 15.6)"><path d="M0 0 L-11.4 0 C-11.4 -5 -8 -9.6 -3.6 -10.8 C-2 -7 -1 -3 0 0Z" fill="#38c860"/><path d="M0 0 C-1 -3 -2 -7 -3.6 -10.8 C1 -12.4 6 -10.6 8.6 -7.4 C5 -6 2 -3 0 0Z" fill="#f8e038"/><path d="M0 0 C2 -3 5 -6 8.6 -7.4 C11.4 -4 12 0 11 3.6 C7 2 3 1 0 0Z" fill="#f8a028"/><path d="M0 0 C3 1 7 2 11 3.6 C9.6 7.6 6.6 10.4 3 11.2 C2.6 7 1.6 3 0 0Z" fill="#f04848"/><path d="M0 0 C1.6 3 2.6 7 3 11.2 C-1 12.2 -5 10.8 -7.6 8.4 C-4.6 6 -2 3 0 0Z" fill="#b868e0"/><path d="M0 0 C-2 3 -4.6 6 -7.6 8.4 C-10 6 -11.4 3 -11.4 0Z" fill="#5888e8"/><circle cx="0" cy="0" r="1.7" fill="#181818"/></g><path d="M5 8 C8 3.6 14 1.6 20 2.6" fill="none" stroke="#cfcfcf" stroke-width="1" opacity="0.6"/><use href="#sc"/></svg><div class="lb">光影魔术手</div></div>
<div class="ic" style="left:150px;top:417px"><svg viewBox="0 0 32 32"><circle cx="16" cy="15.6" r="15.2" fill="#f4f6f8"/><circle cx="16" cy="15.6" r="13.4" fill="#fbfcfd"/><path d="M15.6 3 C22.2 1.8 29.3 7.4 29.4 15.5 C29.4 19.5 28 23 25.3 25.7 C26 20.2 23.2 17 18.6 15 C14 13 12.4 8.4 15.6 3Z" fill="url(#gSg)"/><path d="M15.6 3 C22.2 1.8 29.3 7.4 29.4 15.5 C29.4 19.5 28 23 25.3 25.7 C26 20.2 23.2 17 18.6 15 C14 13 12.4 8.4 15.6 3Z" fill="url(#gSg)" transform="rotate(180 16 15.6)"/><use href="#sc"/></svg><div class="lb">搜狗高速浏<br>览器</div></div>
<div class="ic" style="left:225px;top:417px"><svg viewBox="0 0 32 32"><g filter="url(#fb)"><rect x="4.2" y="0" width="19.6" height="29" fill="#e8e8e4"/><rect x="4.2" y="0" width="19.6" height="3.6" fill="#e8b8d8"/><rect x="6" y="1" width="15" height="1.4" fill="#c080b8"/><path d="M10 8 C13 4.6 18 5 20 9 L18.6 11 C17 8 13 8 10 8Z" fill="#181818"/><path d="M5 8 L11 10 L10 11.4Z" fill="#d02050"/><ellipse cx="13.6" cy="12" rx="4" ry="4.4" fill="#f0f0ec"/><path d="M9 18 C13 16 18 17 22 21 L23 29 L20 29 C19 24 16 21 12 21 C10 23 9 26 9.6 29 L6.4 29 C6 24 7 20 9 18Z" fill="#c83068"/><path d="M5 15 L9 13.6 L8.4 17Z" fill="#88a898"/><path d="M19 14 L23.4 15 L22 18Z" fill="#a8b8b0"/></g></svg><div class="lb"><span class="a">212244maw...</span></div></div>
<div class="ic" style="left:0px;top:499px"><svg viewBox="0 0 32 32"><g filter="url(#fb)"><rect x="5" y="0" width="18" height="29" fill="#f4f2ee"/><rect x="6" y="1" width="16" height="1.4" fill="#d8a8a8"/><rect x="7" y="3.4" width="13" height="1" fill="#e0c0c0"/><path d="M9 10 L13 6.6 L15.6 8 L12 13Z" fill="#38a888"/><path d="M8 13 C9 10 12 10 12.6 13 L12 19 L8 19Z" fill="#c8a888"/><path d="M6 19 C8 17 12 17.6 13 20 L13.4 29 L5.4 29Z" fill="#e8e0d8"/><ellipse cx="17.6" cy="19.6" rx="3.2" ry="3.6" fill="#382420"/><ellipse cx="17.4" cy="20.6" rx="2" ry="2.4" fill="#d8a890"/><path d="M13.6 24 C16 22.6 20 23 22 25 L22.6 29 L13.4 29Z" fill="#d83838"/><rect x="20" y="22" width="3" height="7" fill="#688878"/></g></svg><div class="lb"><span class="a">220845tqu...</span></div></div>
<div class="ic" style="left:75px;top:499px"><svg viewBox="0 0 32 32"><rect x="0.4" y="0.4" width="31.6" height="31.4" rx="3.4" fill="url(#gLu)"/><path d="M0.4 4 L12 12 M31 3 L21 11 M16 0.4 L16 6 M6 0.4 L13 9 M26 0.4 L19 9" stroke="#4a8cd8" stroke-width="2.4" opacity="0.45"/><path d="M7.4 3.4 L8.2 5.4 L10.2 6 L8.2 6.6 L7.4 8.6 L6.6 6.6 L4.6 6 L6.6 5.4Z M27 4.4 L27.8 6.2 L29.6 6.8 L27.8 7.4 L27 9.2 L26.2 7.4 L24.4 6.8 L26.2 6.2Z" fill="#ffffff"/><path d="M7 14 C6 10 9 5.6 16.4 5.4 C23 5.4 26.4 10 25.4 14.4 C27 16 26.4 19 24 19.4 L23 25 L10 25 L9 19.6 C6.4 19 5.6 16 7 14Z" fill="#8a5a38"/><path d="M10 12 C11 9 21 9 22.6 12 C24 15 22 20 20 22 L13 22 C10.6 20 9 15 10 12Z" fill="#f0d0b0"/><circle cx="13.6" cy="11.6" r="2.5" fill="#fff" stroke="#202020" stroke-width="0.8"/><circle cx="19.4" cy="11.6" r="2.5" fill="#fff" stroke="#202020" stroke-width="0.8"/><circle cx="13.8" cy="11.8" r="0.8" fill="#202020"/><circle cx="19.2" cy="11.8" r="0.8" fill="#202020"/><path d="M12.6 16.4 C14 15 19 15 20.4 16.4 C19.4 19 14 19 12.6 16.4Z" fill="#fff8f0" stroke="#804020" stroke-width="0.5"/><path d="M14 22 L24 22 L25 31.6 L13 31.6Z" fill="#38a080"/><use href="#sc"/><use href="#uac"/></svg><div class="lb">鲁大师</div></div>
<div class="ic" style="left:150px;top:499px"><svg viewBox="0 0 32 32"><rect x="1.2" y="2.6" width="28.8" height="27" fill="#0a1014" stroke="#7a8088" stroke-width="1.1"/><rect x="2" y="18" width="27" height="11" fill="#0c2c38" opacity="0.8"/><path d="M2.2 3.6 L29 3.6 L29 9.4 C22 12.6 10 12.6 2.2 9.4Z" fill="#c81818"/><path d="M4 4.6 L27 4.6 L27 6 L4 6Z" fill="#f05040" opacity="0.7"/><circle cx="17.4" cy="19.6" r="6.8" fill="none" stroke="#f0f4f8" stroke-width="1.8"/><rect x="15.8" y="14.8" width="3" height="8.8" fill="#c8d0d8"/><path d="M9 7 C11 4.6 17 4 20 6.6" fill="none" stroke="#fff" stroke-width="1.8" stroke-dasharray="1.6 1"/><circle cx="12.6" cy="10.6" r="1.6" fill="#fff"/><circle cx="16.6" cy="12" r="1.3" fill="#fff"/><circle cx="19.8" cy="8.6" r="1" fill="#fff"/><use href="#sc"/></svg><div class="lb">太阳帝国的<br>原罪反叛<span class="a">...</span></div></div>
<div class="ic" style="left:225px;top:499px"><svg viewBox="0 0 32 32"><g filter="url(#fb)"><rect x="0" y="12" width="29" height="17" fill="#d89050"/><rect x="0" y="24" width="29" height="5" fill="#e0a060"/><path d="M3 16 C5 12 13 12 16 14 C18 16 18 22 15 26 L8 27 C4 25 2 20 3 16Z" fill="#3a2018"/><path d="M6 17 C8 14.6 14 15 15.6 18 C16.6 21 14.6 25 11 26 C7.6 25 5 21 6 17Z" fill="#e8b498"/><path d="M18 12 L29 12 L29 25 L22 24 C20 20 18 16 18 12Z" fill="#e0a888"/><path d="M17 22 L29 20 L29 29 L14 29Z" fill="#e8b8a0"/><path d="M8 18.6 L10.4 18.2 M12 19.4 L14 19.8" stroke="#2a1810" stroke-width="0.8"/><rect x="27.6" y="22" width="1.4" height="5" fill="#f4f0f0"/></g></svg><div class="lb"><span class="a">7cd98d100...</span></div></div>
<div class="ic" style="left:0px;top:581px"><svg viewBox="0 0 32 32"><g filter="url(#fb)"><rect x="0" y="10" width="29" height="19" fill="#fdfdfd"/><path d="M13 15 C14 10.6 23 10 25.6 14 C27.6 18 25 24 21.6 27 L18 24 C15 22 12.4 19 13 15Z" fill="#2c2020"/><path d="M14 17 C15 14.6 19.6 14.6 20.4 17.6 C21 20.6 19 24 16.6 24.4 C14.4 23 13.4 20 14 17Z" fill="#e0b8a0"/><path d="M11.6 23 C13 22 17 24 19 26 L21 29 L11 29Z" fill="#e8c4b0"/></g></svg><div class="lb"><span class="a">3320946_08...</span></div></div>
<div class="ic" style="left:75px;top:581px"><svg viewBox="0 0 32 32"><path d="M1 5 C1 2.4 2.6 1 5 1 L27 1 C29.6 1 31 2.4 31 5 L31 22 L1 22Z" fill="#5a1c10"/><path d="M2 6 L30 6 M2 11 L30 11 M2 16 L30 16 M8 1 L8 6 M20 1 L20 6 M14 6 L14 11 M26 6 L26 11 M6 11 L6 16 M22 11 L22 16" stroke="#7a3018" stroke-width="0.8"/><rect x="1" y="1" width="30" height="21" rx="3" fill="#a04018" opacity="0.35"/><g fill="none" stroke="#fff" stroke-width="3.2" stroke-linecap="round" stroke-linejoin="round"><path d="M3.6 10 L9 11.4 M5 14.4 L11 13 M12 6 C14 4 16 3.4 17.4 4.4 M14 9 L22 7.4 M16 11 L21.4 10.4 L20 16 M17.6 8 L15.6 18 M12.4 14 C15 17 19 18 23 14"/></g><g fill="none" stroke="#e01810" stroke-width="1.7" stroke-linecap="round" stroke-linejoin="round"><path d="M3.6 10 L9 11.4 M5 14.4 L11 13 M12 6 C14 4 16 3.4 17.4 4.4 M14 9 L22 7.4 M16 11 L21.4 10.4 L20 16 M17.6 8 L15.6 18 M12.4 14 C15 17 19 18 23 14"/></g><path d="M16 18 L20 18 L20 31 L16 31Z" fill="#c02010"/><use href="#sc"/><use href="#uac"/></svg><div class="lb">三国魂</div></div>
<div class="ic" style="left:150px;top:581px"><svg viewBox="0 0 32 32"><rect x="0.2" y="0.2" width="31.6" height="31.6" rx="3" fill="url(#gWb)"/><rect x="1" y="0.8" width="30" height="1.2" rx="0.6" fill="#6ab8f8" opacity="0.7"/><g fill="#f4f8fc"><path d="M16.2 2 L21.6 9.6 L18.4 9.6 L18.4 30 L14 30 L14 9.6 L10.8 9.6Z"/><path d="M6.4 10 L10.8 15.6 L8.4 15.6 L8.4 18 L4.4 18 L4.4 15.6 L2 15.6Z"/><path d="M26.6 10 L31 15.8 L28.6 15.8 L28.6 21 C28.6 26 24 30 18.4 30 L18.4 26.4 C22 26.4 24.6 24 24.6 21 L24.6 15.8 L22.2 15.8Z"/></g><use href="#sc"/></svg><div class="lb">万能五笔</div></div>
<div class="ic" style="left:225px;top:581px"><svg viewBox="0 0 32 32"><rect x="0" y="22" width="29" height="7" fill="#d4deee"/><rect x="1.6" y="23.4" width="5" height="1.8" fill="#b4c0d4"/><rect x="16" y="23" width="6" height="1.8" fill="#b8c4d8"/><rect x="17" y="25.6" width="4" height="1.4" fill="#c0cadc"/><rect x="2" y="26" width="7" height="1.2" fill="#c4cee0"/></svg><div class="lb">q</div></div>
<div class="ic" style="left:0px;top:663px"><svg viewBox="0 0 32 32"><g filter="url(#fb)"><rect x="4" y="0" width="20" height="29" fill="#8890a8"/><rect x="4" y="0" width="20" height="8" fill="#c0c4c0"/><rect x="12" y="0" width="12" height="5" fill="#98a0a4"/><rect x="18" y="0" width="4" height="4" fill="#e0e4e8"/><path d="M4 5 C8 1.6 12 3 13.4 6 L10 22 L4 26Z" fill="#3a2c2c"/><ellipse cx="10.4" cy="9.6" rx="3.4" ry="4.6" fill="#e0b8a0" transform="rotate(-20 10.4 9.6)"/><path d="M12 14 C16 11 22 12 24 16 L24 25 L14 27Z" fill="#e8e0e0"/><path d="M20 17 L24 15 L24 27 L19 27Z" fill="#a82838"/><path d="M7 20 C10 18 14 22 15 27 L12 29 L6 29Z" fill="#d8b0a0"/><rect x="4" y="20" width="3" height="9" fill="#9098b8"/></g></svg><div class="lb"><span class="a">1298278563...</span></div></div>
<div class="ic" style="left:75px;top:663px"><svg viewBox="0 0 32 32"><path d="M28 18 C30 21 30.6 24 29.6 26 L26 24Z" fill="#101010"/><ellipse cx="17.6" cy="19.6" rx="10" ry="9.6" fill="#101010"/><ellipse cx="16.8" cy="8.6" rx="9.8" ry="8.4" fill="#141414"/><ellipse cx="18" cy="22.4" rx="6.8" ry="7.2" fill="#ffffff"/><ellipse cx="13.2" cy="7" rx="2.1" ry="2.9" fill="#fff"/><ellipse cx="19.2" cy="7" rx="2.1" ry="2.9" fill="#fff"/><ellipse cx="13.8" cy="7.4" rx="0.9" ry="1.3" fill="#101010"/><path d="M18 7.8 C18.6 6.4 20 6.4 20.6 7.8" fill="none" stroke="#101010" stroke-width="0.8"/><ellipse cx="16.4" cy="12.4" rx="6.6" ry="2.2" fill="#f8a800"/><path d="M10 12 C13 14.6 20 14.6 22.8 12" fill="none" stroke="#c87000" stroke-width="0.6"/><path d="M6 13.4 C10 17 22 17.4 27.6 13 L28.4 17 C23 21 11 21 5.4 17.4Z" fill="#e82818"/><path d="M22.6 17.6 L26 17 L26.6 22.6 L23.6 23Z" fill="#e82818"/><path d="M6 13.4 C10 17 22 17.4 27.6 13" fill="none" stroke="#ff7060" stroke-width="0.8"/><ellipse cx="24" cy="29.4" rx="4.4" ry="2" fill="#f8a800"/><ellipse cx="12" cy="29.6" rx="4" ry="1.8" fill="#f8a800"/><use href="#sc"/></svg><div class="lb">腾讯<span class="a">QQ</span></div></div>
<div class="ic" style="left:150px;top:663px"><svg viewBox="0 0 32 32"><path d="M0.8 10.4 L7 9.8 L7.4 11.4 L1 11.4Z" fill="#e8c050"/><path d="M7 9.6 C8 7.6 11 7.4 12.6 9 C14 11 15 13 18 15 L17 20 C13 19 9 16 7.4 12Z" fill="#1c6cc8"/><circle cx="9" cy="10.4" r="0.8" fill="#fff"/><path d="M13 12.6 C17 8 23 3 29.4 0.6 C27 7 23.6 14 17.6 20.6 C15.6 18.6 14 15.6 13 12.6Z" fill="#2a90e0"/><path d="M14 12.4 C18 8.6 23 4.4 28 2" fill="none" stroke="#7cc8f8" stroke-width="0.9"/><path d="M20.6 16 C24 14.6 29 15 32 17 C29 19.6 24 21 20 21.4 L18 19Z" fill="#1888e0"/><path d="M16.6 18 C18 22 19.6 26 21.6 30.4 C18.6 28 16 24 15 20Z" fill="#1460b8"/><use href="#sc"/></svg><div class="lb">迅雷7</div></div>
<div class="ic" style="left:0px;top:745px"><svg viewBox="0 0 32 32"><g filter="url(#fb)"><rect x="0" y="0" width="29" height="29" fill="#dcdcec"/><rect x="18" y="0" width="11" height="20" fill="#e8e8f4"/><rect x="0" y="22" width="29" height="7" fill="#c8d0d8"/><path d="M2 12 C2 4 8 0.6 13 1 C18 1.4 21 5 20.6 12 C20 17 18 20 17 23 L6 24 C3 21 1.6 17 2 12Z" fill="#5a3428"/><path d="M1 14 L4 10 L5 20 L2 23Z" fill="#4a2c24"/><ellipse cx="13" cy="12.4" rx="4.6" ry="5.8" fill="#e8bca0"/><path d="M8 8 C10 5 16 5 18 9 C15 7.6 11 7.6 8 8Z" fill="#6a3c2c"/><path d="M7 22 C10 19.6 18 19 22 22 L24 29 L6 29Z" fill="#e0b090"/><path d="M10 26 L14 29 L19 26 L20 29 L10 29Z" fill="#28a898"/></g></svg><div class="lb"><span class="a">634115010...</span></div></div>
<div class="ic" style="left:75px;top:745px"><svg viewBox="0 0 32 32"><path d="M1 7.6 C1 5 3 4 5.4 4.6 L8 5.6 L8 26 L4.6 27.4 C2.6 28 1 27 1 25Z" fill="#f88a10"/><path d="M7.6 2.6 C9 0.6 11.6 0.4 13.6 1.6 L29.6 12.6 C31.6 14 31.6 17 29.6 18.4 L13.4 30 C11.6 31.2 9 30.6 7.6 29 L11 24 L24 15.6 L11 7.4Z" fill="#1ea0ec"/><path d="M7.6 2.6 C9 0.6 11.6 0.4 13.6 1.6 L20 6" fill="none" stroke="#60d0ff" stroke-width="1.2" opacity="0.7"/><path d="M6.4 8 C6.4 5.6 8.8 4.6 10.8 5.8 L23.6 13.6 C25.2 14.6 25.2 16.8 23.6 17.8 L10.8 25.6 C8.8 26.8 6.4 25.6 6.4 23.4Z" fill="#68c010"/><path d="M10.4 9.4 L19.6 15.6 L10.4 21.8Z" fill="#ffffff"/><use href="#sc"/></svg><div class="lb">腾讯视频</div></div>
<div class="ic" style="left:150px;top:745px"><svg viewBox="0 0 32 32"><rect x="0.6" y="0.4" width="31" height="31" rx="3.4" fill="url(#gKk)"/><path d="M5.6 26 L5.6 9 C5.6 5.6 8 4 11 4.2 C13 4.4 14.6 5 16 6 C12.6 6 11.4 8 11.4 10.4 L11.4 24Z" fill="url(#gKkP)"/><path d="M12.4 3.8 C19 4.4 25.6 8.4 28.2 14 C27.4 20 22 25.6 14.6 27.6 L13.8 24 C18.6 22 22 18.6 22.6 14.4 C21 10 17.4 6.6 12.4 3.8Z" fill="#1e9ce4"/><path d="M13 5 C17 6 19.6 8.6 21 11" fill="none" stroke="#f0a030" stroke-width="0.9" opacity="0.7"/><use href="#sc"/></svg><div class="lb">迅雷看看高<br>清影视</div></div>
<div class="ic" style="left:0px;top:827px"><svg viewBox="0 0 32 32"><rect x="2.6" y="1" width="27.6" height="26" fill="#9cb8f0"/><rect x="4.2" y="2.6" width="24.4" height="23" fill="#100c54"/><path d="M8.6 8.4 L13.4 8.4 C16.6 8.4 18 10 18 12.4 C18 15 16.4 16.6 13.2 16.6 L11.2 16.6 L11.2 20.6 L8.6 20.6Z M11.2 10.6 L11.2 14.4 L13 14.4 C14.6 14.4 15.4 13.8 15.4 12.5 C15.4 11.2 14.6 10.6 13 10.6Z" fill="#9cb8f0"/><path d="M25 13.4 C24 12.8 23 12.6 22.2 12.6 C21.4 12.6 21 12.9 21 13.4 C21 14.8 25.6 14.6 25.6 17.8 C25.6 19.8 24 20.9 21.8 20.9 C20.6 20.9 19.6 20.7 18.8 20.2 L18.8 17.8 C19.8 18.5 20.8 18.8 21.7 18.8 C22.6 18.8 23 18.5 23 18 C23 16.6 18.6 16.8 18.6 13.6 C18.6 11.8 20 10.5 22.2 10.5 C23.2 10.5 24.2 10.7 25 11Z" fill="#9cb8f0"/><use href="#sc"/><use href="#uac"/></svg><div class="lb"><span class="a">Adobe</span><br><span class="a">Photosh...</span></div></div>
<div class="ic" style="left:75px;top:827px"><svg viewBox="0 0 32 32"><path d="M3.6 0.6 C6 1 8 1 9.6 0.6 C10.6 6 12.6 11 14.6 14 L17.6 14 C19.6 11 21.6 6 22.6 0.6 C24.4 1 26.4 1 28.6 0.6 C27 8 24 14 20 17.6 L12 17.6 C8 14 5 8 3.6 0.6Z" fill="url(#gGold)"/><path d="M5 1.6 C6.6 7 9 12 12.6 16" fill="none" stroke="#fff0a0" stroke-width="0.8" opacity="0.8"/><path d="M11.4 10 C12.6 7 19.6 7 20.8 10 L21.6 15 L10.6 15Z" fill="#b07818"/><circle cx="16.1" cy="11" r="2.4" fill="#e8b040"/><circle cx="16.1" cy="11" r="1.1" fill="#5a3808"/><path d="M0.6 14.6 L4.4 11.4 L8 13.6 L6 16.6 L1.4 17Z" fill="#e8c468"/><path d="M31.8 14.6 L28 11.4 L24.4 13.6 L26.4 17.4 L30.8 18.4Z" fill="#e8c468"/><path d="M10 15.6 L22.4 15.6 L24 20 L9 20Z" fill="#d8a030"/><path d="M12 19 L24 19 L27 28 L22 31 L18 24 L14 30 L10 24Z" fill="#1c1c1c"/><path d="M22.6 21 L26.6 24 L29.6 30 L26 31.6 L23 26Z" fill="#4a4c50"/><path d="M24.4 23.4 L28.6 30" stroke="#8a8c90" stroke-width="0.7"/><use href="#sc"/></svg><div class="lb"><span class="a">age3y - </span>快捷<br>方式</div></div>
<div class="ic" style="left:150px;top:827px"><svg viewBox="0 0 32 32"><path d="M2.6 5 L15 5 L15 7.2 L5.4 7.2 L5.4 8.4 L15 8.4 L15 13.4 L2.6 13.4 L2.6 11.4 L12.2 11.4 L12.2 10.4 L2.6 10.4Z" fill="url(#gSc)"/><path d="M17.4 5 L31.4 5 L31.4 7.2 L20.4 7.2 L20.4 11.2 L31.4 11.2 L31.4 13.4 L17.4 13.4Z" fill="url(#gSc)"/><rect x="1.4" y="14.6" width="30" height="1.6" fill="#e01818"/><rect x="1.4" y="15.8" width="14" height="0.9" fill="#881010"/><path d="M16.6 18 L23.4 18 L23.4 23.6 L19 23.6 L19 25.2 L23.4 25.2 L23.4 27.4 L16.6 27.4 L16.6 21.6 L21 21.6 L21 20.2 L16.6 20.2Z" fill="#e01818"/><rect x="2" y="3.6" width="30" height="0.6" fill="#555" opacity="0.5"/><use href="#sc"/></svg><div class="lb">最高指挥官2</div></div>
<div class="ic" style="left:0px;top:909px"><svg viewBox="0 0 32 32"><path d="M4 0.6 L28 0.6 C30.4 0.6 31.8 2 31.8 4.4 L31.8 12 C31.8 14 30.8 15 29 15.4 L26.6 16 L5 3.6 L2.4 1.4 C2.8 0.9 3.4 0.6 4 0.6Z" fill="url(#gCbY)"/><path d="M0.4 5 C0.4 3 1.2 2 2.6 1.6 L11.6 7 L11.6 25.4 L2.6 30.6 C1.2 30.2 0.4 29 0.4 27.4Z" fill="url(#gCbB)"/><path d="M26.6 16.6 L29 17 C30.8 17.4 31.8 18.4 31.8 20.4 L31.8 27.6 C31.8 30 30.4 31.4 28 31.4 L4 31.4 C3.4 31.4 2.8 31.2 2.4 30.8 L5 28.6Z" fill="url(#gCbR)"/><path d="M11.8 7.4 L26.4 16.1 L11.8 24.8Z" fill="#0a0a0a"/><use href="#sc"/></svg><div class="lb"><span class="a">CBox</span>央视影<br>音</div></div>
<div class="ic" style="left:75px;top:909px"><svg viewBox="0 0 32 32"><path d="M16 0.8 C24.4 0.8 31.2 7.4 31.2 15.8 C31.2 18 30.8 20 30 21.8 L23 21.8 C23.8 20 24.2 18 24.2 15.8 C24.2 11.4 20.6 7.8 16 7.8 C11.4 7.8 7.8 11.4 7.8 15.8 C7.8 18 8.6 20 10 21.6 L3 25 C1.6 22.4 0.8 19.2 0.8 15.8 C0.8 7.4 7.6 0.8 16 0.8Z" fill="url(#gQb)"/><path d="M19 30.8 C16.4 30.8 14.8 29 14.8 27 C14.8 25 16.4 23.4 18.4 23.4 C18.8 20.4 21 18.4 23.6 18.4 C26.4 18.4 28.4 20.4 28.8 23 C30.8 23.4 32 25 32 26.8 C32 29 30.4 30.8 28 30.8Z" fill="#ffffff"/><use href="#sc"/></svg><div class="lb"><span class="a">QQ</span>浏览器</div></div>
<div class="ic" style="left:150px;top:909px"><svg viewBox="0 0 32 32"><g filter="url(#fb)"><rect x="0" y="7" width="29" height="22" fill="#b8bc38"/><rect x="8.7" y="10.0" width="2.7" height="1.3" fill="#88a020"/><rect x="2.5" y="18.7" width="3.2" height="1.6" fill="#98a828"/><rect x="11.7" y="8.4" width="1.6" height="2.0" fill="#98a828"/><rect x="25.6" y="19.6" width="2.6" height="1.3" fill="#686c18"/><rect x="1.3" y="11.4" width="2.5" height="1.4" fill="#686c18"/><rect x="3.9" y="9.4" width="2.0" height="2.7" fill="#c8b830"/><rect x="2.8" y="18.4" width="1.8" height="1.4" fill="#98a828"/><rect x="15.2" y="19.4" width="2.4" height="2.2" fill="#a8a030"/><rect x="12.6" y="25.5" width="2.1" height="1.6" fill="#c8b830"/><rect x="18.9" y="11.9" width="2.5" height="2.1" fill="#a8a030"/><rect x="19.7" y="12.8" width="3.4" height="1.4" fill="#686c18"/><rect x="4.5" y="13.8" width="3.3" height="2.0" fill="#98a828"/><rect x="20.6" y="18.5" width="3.2" height="1.8" fill="#a8a030"/><rect x="16.0" y="18.6" width="2.3" height="2.7" fill="#e0d858"/><rect x="12.8" y="20.3" width="1.5" height="2.5" fill="#d0c848"/><rect x="7.7" y="14.7" width="2.7" height="1.2" fill="#d0c848"/><rect x="9.6" y="19.2" width="2.4" height="1.6" fill="#e0d858"/><rect x="3.5" y="12.0" width="2.2" height="2.8" fill="#98a828"/><rect x="4.5" y="15.0" width="2.0" height="1.4" fill="#686c18"/><rect x="23.3" y="12.6" width="2.2" height="1.8" fill="#686c18"/><rect x="25.9" y="10.0" width="1.8" height="1.6" fill="#787820"/><rect x="0.3" y="23.6" width="1.8" height="1.7" fill="#c8b830"/><rect x="11.3" y="14.4" width="2.5" height="2.9" fill="#88a020"/><rect x="25.7" y="20.1" width="2.9" height="2.0" fill="#88a020"/><rect x="10.6" y="15.0" width="1.6" height="2.3" fill="#d8d040"/><rect x="5.1" y="26.7" width="2.3" height="1.4" fill="#d8d040"/><rect x="2.8" y="18.3" width="2.5" height="2.9" fill="#d8d040"/><rect x="1.9" y="11.2" width="2.2" height="2.3" fill="#a8a030"/><rect x="16.3" y="16.5" width="1.6" height="2.1" fill="#d0c848"/><rect x="13.0" y="13.2" width="1.7" height="2.5" fill="#e0d858"/><rect x="12.9" y="20.8" width="2.4" height="1.6" fill="#88a020"/><rect x="9.8" y="20.8" width="3.2" height="2.6" fill="#e0d858"/><rect x="26.4" y="24.3" width="2.6" height="1.7" fill="#a8a030"/><rect x="24.5" y="14.1" width="1.8" height="2.2" fill="#88a020"/><rect x="8.9" y="11.5" width="3.0" height="3.0" fill="#787820"/><rect x="21.8" y="23.4" width="2.9" height="1.6" fill="#88a020"/><rect x="13.3" y="21.6" width="3.4" height="2.6" fill="#d0c848"/><rect x="7.0" y="20.9" width="3.3" height="2.0" fill="#a8a030"/><rect x="25.8" y="14.3" width="1.8" height="1.6" fill="#787820"/><rect x="9.1" y="16.7" width="3.4" height="2.3" fill="#d8d040"/><rect x="12.9" y="20.1" width="3.0" height="1.4" fill="#98a828"/><rect x="24.6" y="22.6" width="2.9" height="2.1" fill="#c8b830"/><rect x="11.7" y="19.7" width="1.6" height="2.9" fill="#686c18"/><rect x="12.5" y="21.9" width="1.6" height="1.5" fill="#c8b830"/><rect x="0.7" y="18.8" width="2.3" height="2.4" fill="#d0c848"/><rect x="17.7" y="14.0" width="2.5" height="1.4" fill="#d8d040"/><rect x="21.6" y="21.5" width="1.6" height="2.5" fill="#c8b830"/><rect x="11.7" y="24.4" width="3.1" height="1.6" fill="#e0d858"/><rect x="5.7" y="17.0" width="2.9" height="1.8" fill="#88a020"/><rect x="11.3" y="9.6" width="3.2" height="1.8" fill="#d0c848"/><rect x="17.9" y="23.3" width="2.4" height="2.7" fill="#88a020"/><rect x="3.5" y="10.0" width="2.4" height="2.8" fill="#c8b830"/><rect x="16.4" y="22.5" width="1.7" height="1.5" fill="#98a828"/><rect x="15.0" y="13.5" width="2.4" height="2.2" fill="#98a828"/><rect x="23.8" y="8.1" width="1.8" height="1.3" fill="#98a828"/><rect x="13.7" y="18.2" width="2.9" height="2.8" fill="#d0c848"/><rect x="8.8" y="26.5" width="2.6" height="1.6" fill="#e0d858"/><rect x="12.2" y="17.7" width="2.4" height="2.9" fill="#88a020"/><rect x="23.7" y="25.8" width="1.9" height="2.2" fill="#787820"/><rect x="22.7" y="9.7" width="1.6" height="2.0" fill="#98a828"/><rect x="18.1" y="15.6" width="1.8" height="1.7" fill="#98a828"/><rect x="24.2" y="10.1" width="2.8" height="2.4" fill="#c8b830"/><rect x="6.8" y="9.7" width="2.3" height="2.5" fill="#98a828"/><rect x="10.8" y="16.7" width="3.4" height="2.7" fill="#c8b830"/><rect x="19.1" y="26.9" width="2.2" height="2.0" fill="#a8a030"/><rect x="8.6" y="21.4" width="1.4" height="2.2" fill="#d0c848"/><rect x="19.0" y="14.7" width="2.4" height="1.7" fill="#98a828"/><rect x="3.0" y="25.4" width="1.9" height="2.8" fill="#98a828"/><rect x="7.2" y="7.8" width="3.0" height="1.7" fill="#c8b830"/><rect x="22.1" y="24.0" width="2.8" height="2.9" fill="#686c18"/><rect x="10" y="8" width="10" height="9" fill="#989048" opacity="0.7"/><rect x="24" y="22" width="5" height="7" fill="#78a820" opacity="0.8"/><rect x="0" y="20" width="2" height="6" fill="#485010"/></g></svg><div class="lb">1</div></div>
<div id="tb"><svg width="1280" height="40" viewBox="0 984 1280 40" style="position:absolute;left:0;top:-2px;overflow:visible"><defs>
<linearGradient id="orbg" x1="0" y1="0" x2="0" y2="1"><stop offset="0" stop-color="#5a80b8"/><stop offset="0.45" stop-color="#2a5a98"/><stop offset="0.55" stop-color="#0a4888"/><stop offset="0.8" stop-color="#0868b8"/><stop offset="1" stop-color="#10a8e8"/></linearGradient>
<linearGradient id="flR" x1="0" y1="0" x2="0.3" y2="1"><stop offset="0" stop-color="#e04818"/><stop offset="1" stop-color="#f89030"/></linearGradient>
<linearGradient id="flG" x1="0" y1="0" x2="0.3" y2="1"><stop offset="0" stop-color="#58a030"/><stop offset="1" stop-color="#b0d870"/></linearGradient>
<linearGradient id="flB" x1="0" y1="0" x2="0.3" y2="1"><stop offset="0" stop-color="#2878c8"/><stop offset="1" stop-color="#58b8f0"/></linearGradient>
<linearGradient id="flY" x1="0" y1="0" x2="0.3" y2="1"><stop offset="0" stop-color="#f8d048"/><stop offset="1" stop-color="#f0a020"/></linearGradient>
<radialGradient id="orbgl" cx="0.5" cy="1" r="0.6"><stop offset="0" stop-color="#20d0ff" stop-opacity="1"/><stop offset="0.6" stop-color="#18b0f0" stop-opacity="0.5"/><stop offset="1" stop-color="#18a0f0" stop-opacity="0"/></radialGradient>
<linearGradient id="orbhi" x1="0" y1="0" x2="0" y2="1"><stop offset="0" stop-color="#e8f0fc" stop-opacity="0.85"/><stop offset="1" stop-color="#c0d4f0" stop-opacity="0.22"/></linearGradient>
<linearGradient id="fold" x1="0" y1="0" x2="0" y2="1"><stop offset="0" stop-color="#f8e8a0"/><stop offset="1" stop-color="#e8c860"/></linearGradient>
<linearGradient id="foldb" x1="0" y1="0" x2="0" y2="1"><stop offset="0" stop-color="#a8d8f0"/><stop offset="1" stop-color="#5aa8d8"/></linearGradient>
<radialGradient id="helpg" cx="0.4" cy="0.3" r="0.8"><stop offset="0" stop-color="#4860e8"/><stop offset="1" stop-color="#0c1890"/></radialGradient>
<linearGradient id="glow" x1="0" y1="0" x2="0" y2="1"><stop offset="0" stop-color="#b8e0f8" stop-opacity="0"/><stop offset="1" stop-color="#b8e0f8" stop-opacity="0.9"/></linearGradient>
</defs><rect x="120" y="986" width="1" height="38" fill="#ffffff" opacity="0.05"/><rect x="182" y="986" width="1" height="38" fill="#ffffff" opacity="0.05"/><rect x="244" y="986" width="1" height="38" fill="#ffffff" opacity="0.05"/><rect x="306" y="986" width="1" height="38" fill="#ffffff" opacity="0.05"/><circle cx="27" cy="1004.5" r="19.2" fill="#0a1a2c" opacity="0.9"/><circle cx="27" cy="1004.5" r="18.4" fill="url(#orbg)" stroke="#9ab8d8" stroke-width="0.9"/><ellipse cx="27" cy="1017" rx="15" ry="9" fill="url(#orbgl)"/><path d="M9.2 1001 C10 993 17 987 27 987 C37 987 44 993 44.8 1001 C40 1004.4 34 1003 27 1003 C20 1003 14 1004.4 9.2 1001Z" fill="url(#orbhi)"/><path d="M18.6 994.4 C22 992.6 25 992.8 28.4 994.4 L26.6 1002.4 C23.6 1001 20.6 1001 17.4 1002.4Z" fill="url(#flR)"/><path d="M29.6 995.6 C32.6 997 35.6 997 38.6 995.4 L36.6 1004.2 C33.6 1005.6 30.6 1005.4 27.8 1004.2Z" fill="url(#flG)"/><path d="M17 1003.6 C20 1002.4 23.2 1002.4 26.2 1003.8 L24.4 1011.8 C21.4 1010.6 18.4 1010.6 15.2 1012Z" fill="url(#flB)"/><path d="M27.4 1005.4 C30.4 1006.6 33.4 1006.6 36.4 1005.4 L34.4 1014 C31.4 1015.4 28.4 1015.2 25.6 1013.8Z" fill="url(#flY)"/><g transform="translate(73 989)"><path d="M1 4 L1 2.4 C1 1.6 1.6 1 2.4 1 L12 1 L14 3.4 L29 3.4 C30 3.4 30.6 4 30.6 5 L30.6 8 L1 8Z" fill="#e8d088"/><rect x="3" y="1.8" width="3" height="1.6" fill="#d83030"/><rect x="7" y="1.8" width="3" height="1.6" fill="#38a838"/><path d="M12 6 L12 4.6 L20 4.6 L21.6 6.4 L31 6.4 L31 9 L12 9Z" fill="#f0dc98"/><rect x="18" y="5" width="3" height="1.4" fill="#3890d8"/><rect x="0.6" y="7.4" width="31" height="20.6" rx="1.4" fill="url(#fold)" stroke="#c8a848" stroke-width="0.6"/><path d="M1.4 12 L31 12" stroke="#fff4c0" stroke-width="1" opacity="0.7"/><path d="M6.4 28.6 L6.4 19.4 C6.4 18.4 7 17.8 8 17.8 L24.6 17.8 C25.6 17.8 26.2 18.4 26.2 19.4 L26.2 28.6 L22 28.6 L22 23.4 L10.6 23.4 L10.6 28.6Z" fill="url(#foldb)" stroke="#d8f0fc" stroke-width="0.7"/><rect x="8" y="19.2" width="16.6" height="2" fill="#d8f0fc" opacity="0.7"/></g><g transform="translate(134.6 987.9)"><circle cx="16" cy="15.6" r="15.6" fill="#f4f6f8"/><circle cx="16" cy="15.6" r="13.8" fill="#fbfcfd"/><path d="M15.6 3 C22.2 1.8 29.3 7.4 29.4 15.5 C29.4 19.5 28 23 25.3 25.7 C26 20.2 23.2 17 18.6 15 C14 13 12.4 8.4 15.6 3Z" fill="url(#gSg)"/><path d="M15.6 3 C22.2 1.8 29.3 7.4 29.4 15.5 C29.4 19.5 28 23 25.3 25.7 C26 20.2 23.2 17 18.6 15 C14 13 12.4 8.4 15.6 3Z" fill="url(#gSg)" transform="rotate(180 16 15.6)"/></g><g transform="translate(196.6 988)"><path d="M0.8 10.4 L7 9.8 L7.4 11.4 L1 11.4Z" fill="#e8c050"/><path d="M7 9.6 C8 7.6 11 7.4 12.6 9 C14 11 15 13 18 15 L17 20 C13 19 9 16 7.4 12Z" fill="#1c6cc8"/><circle cx="9" cy="10.4" r="0.8" fill="#fff"/><path d="M13 12.6 C17 8 23 3 29.4 0.6 C27 7 23.6 14 17.6 20.6 C15.6 18.6 14 15.6 13 12.6Z" fill="#2a90e0"/><path d="M14 12.4 C18 8.6 23 4.4 28 2" fill="none" stroke="#7cc8f8" stroke-width="0.9"/><path d="M20.6 16 C24 14.6 29 15 32 17 C29 19.6 24 21 20 21.4 L18 19Z" fill="#1888e0"/><path d="M16.6 18 C18 22 19.6 26 21.6 30.4 C18.6 28 16 24 15 20Z" fill="#1460b8"/></g><g transform="translate(260 988)"><path d="M0.2 5.2 C3.6 5.6 8 7.6 11 10.6 L12.6 18 C7 16 2.2 11.6 0.2 5.2Z" fill="#f2f4f8"/><path d="M29.4 5.2 C26 5.6 21.6 7.6 18.6 10.6 L17 18 C22.6 16 27.4 11.6 29.4 5.2Z" fill="#f2f4f8"/><path d="M1.6 6.8 C4 10 7.8 13 11.8 14.4 M3.4 9.8 C6 12.6 9 14.8 12.2 16" stroke="#9098b0" stroke-width="0.7" fill="none"/><path d="M28 6.8 C25.6 10 21.8 13 17.8 14.4 M26.2 9.8 C23.6 12.6 20.6 14.8 17.4 16" stroke="#9098b0" stroke-width="0.7" fill="none"/><path d="M5.4 6.4 C8 6.6 11 7.6 14.8 9.6 L14.8 27.4 C10 24 6.4 16 5.4 6.4Z" fill="#3a68b0"/><path d="M24.2 6.4 C21.6 6.6 18.6 7.6 14.8 9.6 L14.8 27.4 C19.6 24 23.2 16 24.2 6.4Z" fill="#d02424"/><path d="M8.6 9.4 C10.6 9.8 12.8 10.8 14.8 12.4 C16.8 10.8 19 9.8 21 9.4 C20.4 14 18 18.6 14.8 21 C11.6 18.6 9.2 14 8.6 9.4Z" fill="#f0f0f4" opacity="0.35"/><path d="M9.4 10.4 L12.4 11.4 L14.8 17 L17.2 11.4 L20.2 10.4 L16.4 20.4 L13.2 20.4Z" fill="#f0c428"/><path d="M12 20.6 L17.6 20.6 L16.8 25 L14.8 27.6 L12.8 25Z" fill="#e4e6ec"/><path d="M14.8 21 L14.8 27" stroke="#8890a0" stroke-width="0.6"/><path d="M14.8 0.2 L14.8 11 M11.2 4.4 L18.4 4.4" stroke="#101010" stroke-width="1.7"/><circle cx="14.8" cy="1.2" r="1.1" fill="#101010"/></g><g transform="translate(321 988)"><g filter="url(#fb)"><rect x="0" y="0" width="32" height="32" fill="#2a8088"/><rect x="0" y="0" width="32" height="8.4" fill="#7aa4d8"/><rect x="0" y="0" width="32" height="3" fill="#6a94d0"/><rect x="2" y="4" width="11" height="2.4" fill="#d8e0f0" opacity="0.8"/><rect x="20" y="3.6" width="10" height="2.6" fill="#e0e8f4" opacity="0.75"/><rect x="0" y="6.6" width="32" height="2.2" fill="#a8c4e0" opacity="0.8"/><rect x="0" y="8.4" width="32" height="4" fill="#2a7490"/><rect x="18.1" y="25.4" width="4.4" height="2.9" fill="#2c8488"/><rect x="18.9" y="21.5" width="4.5" height="2.6" fill="#23767e"/><rect x="18.8" y="28.2" width="2.3" height="2.0" fill="#23767e"/><rect x="11.0" y="13.8" width="2.7" height="2.5" fill="#2a7c84"/><rect x="8.1" y="28.5" width="4.3" height="1.5" fill="#2a8890"/><rect x="4.0" y="23.1" width="2.4" height="1.2" fill="#2a8890"/><rect x="6.1" y="15.9" width="4.9" height="2.8" fill="#349a9c"/><rect x="9.1" y="15.6" width="4.6" height="2.3" fill="#23767e"/><rect x="27.3" y="24.4" width="4.7" height="2.8" fill="#349a9c"/><rect x="0.6" y="19.5" width="4.8" height="1.7" fill="#349a9c"/><rect x="8.7" y="22.9" width="2.0" height="2.4" fill="#349a9c"/><rect x="1.9" y="18.4" width="2.9" height="2.5" fill="#23767e"/><rect x="14.0" y="24.7" width="2.2" height="3.0" fill="#2a8890"/><rect x="27.5" y="18.4" width="3.2" height="2.2" fill="#2a7c84"/><rect x="10.6" y="22.4" width="2.0" height="1.3" fill="#23767e"/><rect x="18.1" y="29.2" width="2.4" height="1.6" fill="#2a7c84"/><rect x="10.0" y="18.4" width="3.6" height="2.6" fill="#2a8890"/><rect x="17.1" y="26.1" width="3.1" height="1.7" fill="#2a7c84"/><rect x="27.4" y="13.6" width="3.0" height="2.3" fill="#23767e"/><rect x="9.9" y="28.6" width="3.6" height="1.8" fill="#349a9c"/><rect x="8.9" y="26.4" width="3.9" height="2.5" fill="#349a9c"/><rect x="28.9" y="14.9" width="2.1" height="3.0" fill="#3aa09c"/><rect x="26.8" y="12.6" width="4.2" height="1.8" fill="#349a9c"/><rect x="13.2" y="19.6" width="2.2" height="2.8" fill="#2a8890"/><rect x="23.2" y="18.0" width="2.6" height="3.0" fill="#3aa09c"/><rect x="27.5" y="23.3" width="4.4" height="1.4" fill="#2a7c84"/><rect x="10.8" y="13.1" width="3.3" height="1.5" fill="#3aa09c"/><rect x="24.7" y="29.6" width="3.4" height="2.1" fill="#2c8488"/><rect x="9.2" y="16.9" width="3.4" height="2.8" fill="#2a8890"/><rect x="10.9" y="29.8" width="4.9" height="2.2" fill="#2a7c84"/><rect x="25.2" y="15.2" width="3.5" height="2.1" fill="#3aa09c"/><rect x="25.2" y="18.5" width="4.4" height="2.6" fill="#2c8488"/><rect x="17.0" y="12.6" width="2.9" height="2.2" fill="#2c8488"/><rect x="8.1" y="20.7" width="4.3" height="2.4" fill="#349a9c"/><rect x="27.7" y="18.1" width="2.5" height="2.7" fill="#2a7c84"/><rect x="15.9" y="16.5" width="4.0" height="2.0" fill="#3aa09c"/><rect x="18.8" y="26.4" width="3.0" height="2.4" fill="#2c8488"/><rect x="27.2" y="19.4" width="4.8" height="1.5" fill="#2c8488"/><rect x="13.0" y="18.6" width="3.0" height="1.5" fill="#23767e"/><rect x="5.8" y="18.5" width="4.6" height="1.7" fill="#2a8890"/><ellipse cx="18" cy="19" rx="9" ry="5" fill="#184c5c" opacity="0.8" filter="url(#fb1)"/><ellipse cx="11" cy="14" rx="5" ry="2.4" fill="#1c5866" opacity="0.6" filter="url(#fb1)"/><rect x="4" y="15.6" width="5" height="2" fill="#e8f0f0"/><rect x="0" y="28" width="32" height="4" fill="#2a7c80" opacity="0.7"/></g></g><text x="994.8" y="1006.6" font-family="Liberation Serif,serif" font-weight="bold" font-size="11.5" fill="#fff" textLength="12.6" lengthAdjust="spacingAndGlyphs">EN</text><circle cx="1023.2" cy="1001.8" r="7.6" fill="#e8ecf8"/><circle cx="1023.2" cy="1001.8" r="6.6" fill="url(#helpg)"/><text x="1023.2" y="1006" text-anchor="middle" font-family="Liberation Sans,sans-serif" font-weight="bold" font-size="11.5" fill="#fff">?</text><path d="M1043.6 993.4 L1048.6 993.4 L1048.6 997 L1043.6 997Z M1041.4 995.6 L1046.4 995.6 L1046.4 999 L1041.4 999Z" fill="#181a1c" stroke="#fff" stroke-width="1"/><path d="M1042 1005.4 L1047.6 1005.4 L1044.8 1008.4Z" fill="#fff"/><path d="M1081.6 1007.4 L1089.4 1007.4 L1085.5 1003.2Z" fill="#fff"/><g transform="translate(1102.6 996.6)"><ellipse cx="7.4" cy="10.4" rx="5.6" ry="5.6" fill="#181818"/><ellipse cx="7" cy="4.6" rx="4.6" ry="4.2" fill="#1c1c1c"/><ellipse cx="7.4" cy="11.4" rx="3.6" ry="4" fill="#fff"/><ellipse cx="5.6" cy="3.8" rx="1" ry="1.4" fill="#fff"/><ellipse cx="8.4" cy="3.8" rx="1" ry="1.4" fill="#fff"/><ellipse cx="7" cy="6.4" rx="3" ry="1.1" fill="#f8a800"/><path d="M2 7.4 C5 9.4 10 9.4 12.6 7.2 L13 9.6 C10 11.6 4.6 11.6 1.8 9.8Z" fill="#f03098"/><path d="M9.6 1 L13.6 -0.6 L13 3.4Z" fill="#f850b0"/><path d="M4 9.6 L11 9.6 L10 13 L5 13Z" fill="#f03098" opacity="0.85"/><ellipse cx="3.6" cy="15.8" rx="2.6" ry="1.1" fill="#f8a800"/><ellipse cx="11" cy="15.8" rx="2.6" ry="1.1" fill="#f8a800"/></g><rect x="1123.4" y="988" width="1" height="34" fill="#b0b4b8" opacity="0.42"/><rect x="1144.4" y="988" width="1" height="34" fill="#b0b4b8" opacity="0.42"/><rect x="1124.4" y="985" width="20" height="39" fill="#ffffff" opacity="0.04"/><path d="M1128.4 1025 L1134.4 1016.4 L1140.4 1025Z" fill="#bfe2f8" filter="url(#fb1)" opacity="0.9"/><rect x="1127" y="997.6" width="1.4" height="14.4" fill="#f0f0f0"/><path d="M1128.4 999 C1131 997.8 1133 998 1134.6 999.2 C1136 1000.2 1138 1000.2 1140.4 999.4 L1140.4 1005.6 C1138 1006.6 1136 1006.6 1134.6 1005.6 C1133 1004.4 1131 1004.2 1128.4 1005.4Z" fill="#f4f4f4"/><path d="M1134.6 999.2 C1136 1000.2 1138 1000.2 1140.4 999.4 L1140.4 1005.6 C1138 1006.6 1136 1006.6 1134.6 1005.6Z" fill="#b8bcc0"/><circle cx="1137" cy="1008.4" r="4.9" fill="#d42424" stroke="#f0b0b0" stroke-width="0.8"/><path d="M1135 1006.4 L1139 1010.4 M1139 1006.4 L1135 1010.4" stroke="#fff" stroke-width="1.5"/><g fill="none" stroke="#f0f0f0" stroke-width="1.3"><rect x="1155.6" y="1000.4" width="9.4" height="7.8" fill="#2c2e30"/><path d="M1157 1011.4 L1163.6 1011.4 M1160.3 1008.4 L1160.3 1011.4"/><path d="M1153.6 1010 L1153.6 1003.6 M1151.8 998.6 L1151.8 1002 C1151.8 1003.2 1152.4 1003.6 1153.6 1003.6 C1154.8 1003.6 1155.4 1003.2 1155.4 1002 L1155.4 998.6 M1153.6 998.6 L1153.6 996.4"/></g><path d="M1176.4 1002 L1179 1002 L1183 998.4 L1183 1011.6 L1179 1008 L1176.4 1008Z" fill="#f4f4f4"/><path d="M1185.6 1001.6 C1187.2 1003.4 1187.2 1006.6 1185.6 1008.4" fill="none" stroke="#e0e0e0" stroke-width="1.1"/><rect x="1266.5" y="986.5" width="13" height="36" fill="#ffffff" fill-opacity="0.03" stroke="#8a8a8a" stroke-opacity="0.75" stroke-width="1"/></svg><div class="t" style="left:1201px;top:4px;width:60px;text-align:center;line-height:15px;letter-spacing:-0.3px">19:17</div><div class="t" style="left:1201px;top:21px;width:60px;text-align:center;line-height:15px;letter-spacing:-0.25px">2014/5/12</div></div></body></html>
